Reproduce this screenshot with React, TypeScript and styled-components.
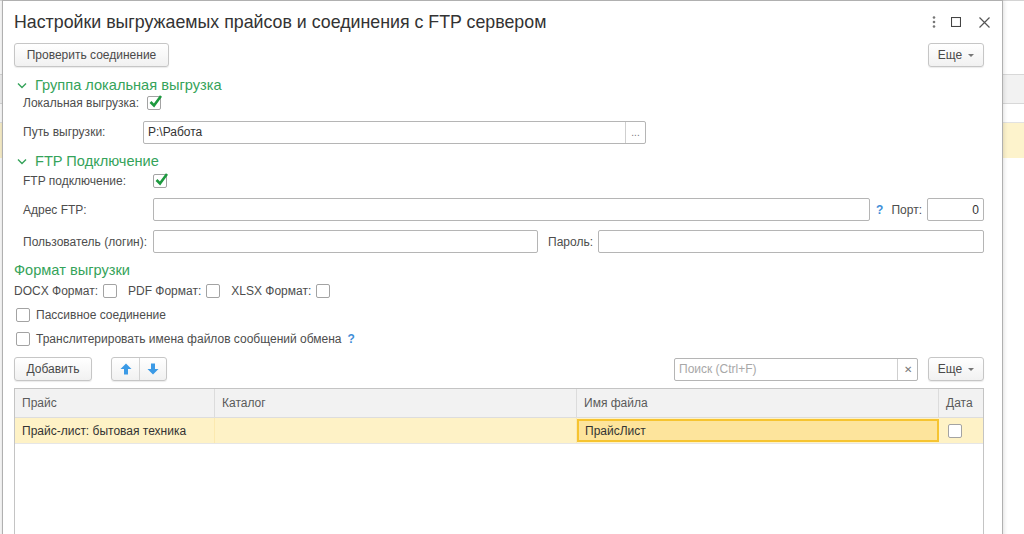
import React from "react";
import styled, { createGlobalStyle } from "styled-components";

const GlobalStyle = createGlobalStyle`
  html, body { margin: 0; padding: 0; background: #ffffff; }
  body { font-family: "Liberation Sans", Arial, sans-serif; }
  * { box-sizing: border-box; }
`;

const Desktop = styled.div`
  position: relative;
  width: 1024px;
  height: 534px;
  overflow: hidden;
  background: #ffffff;
`;

const Backdrop = styled.div`
  display: flex;
  flex-direction: column;
  height: 100%;
  border-top: 1px solid #d4d4d4;
`;

const BackHeader = styled.div`
  margin-top: 73px;
  height: 30px;
  background: #f2f2f2;
  border-top: 1px solid #d8d8d8;
  border-bottom: 1px solid #d8d8d8;
`;

const BackRow = styled.div`
  margin-top: 18px;
  height: 36px;
  border-top: 1px solid #e2e2e2;
  background: #fdf3cc;
`;

const Window = styled.section`
  position: absolute;
  left: 2px;
  top: 0;
  width: 1001px;
  height: 560px;
  background: #ffffff;
  border: 1px solid #b0b0b0;
  box-shadow: 0 0 5px rgba(0, 0, 0, 0.18);
  padding: 0 18px 0 11px;
  display: flex;
  flex-direction: column;
  color: #4a4a4a;
  font-size: 12px;
`;

const TitleBar = styled.header`
  display: flex;
  align-items: center;
  height: 42px;
  margin-right: -11px;
  flex-shrink: 0;
`;

const Title = styled.h1`
  margin: 0;
  flex: 1;
  font-weight: normal;
  font-size: 17.8px;
  color: #333333;
  padding-top: 1px;
`;

const TitleIcon = styled.span<{ $ml: number }>`
  display: flex;
  align-items: center;
  justify-content: center;
  width: 22px;
  height: 22px;
  margin-left: ${(p) => p.$ml}px;
`;

const Row = styled.div<{ $h: number; $mt?: number }>`
  display: flex;
  align-items: center;
  height: ${(p) => p.$h}px;
  margin-top: ${(p) => p.$mt ?? 0}px;
  flex-shrink: 0;
`;

const Spacer = styled.div`
  flex: 1;
`;

const Button = styled.button<{ $w?: number; $ml?: number }>`
  height: 24px;
  ${(p) => (p.$w ? `width: ${p.$w}px;` : "")}
  margin-left: ${(p) => p.$ml ?? 0}px;
  padding: 0 6px;
  white-space: nowrap;
  font-family: inherit;
  font-size: 12px;
  color: #4a4a4a;
  background: linear-gradient(#ffffff, #f1f1f1);
  border: 1px solid #c6c6c6;
  border-radius: 3px;
  box-shadow: 0 1px 1px rgba(0, 0, 0, 0.08);
  display: flex;
  align-items: center;
  justify-content: center;
  gap: 6px;
`;

const Caret = styled.span`
  width: 0;
  height: 0;
  border-left: 3px solid transparent;
  border-right: 3px solid transparent;
  border-top: 3px solid #777;
  margin-top: 1px;
`;

const GroupTitle = styled.div<{ $mt: number }>`
  display: flex;
  align-items: center;
  height: 18px;
  margin-top: ${(p) => p.$mt}px;
  color: #35a35a;
  font-size: 14.6px;
  flex-shrink: 0;
`;

const Chevron = styled.svg`
  width: 10px;
  height: 7px;
  margin: 0 8px 0 3px;
`;

const Label = styled.span<{ $w?: number; $pl?: number }>`
  ${(p) => (p.$w ? `width: ${p.$w}px;` : "")}
  padding-left: ${(p) => p.$pl ?? 0}px;
  flex-shrink: 0;
  white-space: nowrap;
  color: #4d4d4d;
`;

const Box = styled.span<{ $ml?: number }>`
  position: relative;
  width: 14px;
  height: 14px;
  flex-shrink: 0;
  margin-left: ${(p) => p.$ml ?? 0}px;
  border: 1px solid #a3a3a3;
  border-radius: 2px;
  background: #ffffff;
`;

const Tick = styled.svg`
  position: absolute;
  left: 1px;
  top: -3px;
  width: 13px;
  height: 14px;
`;

const Input = styled.div<{ $w?: number; $ml?: number; $align?: string }>`
  height: 23px;
  ${(p) => (p.$w ? `width: ${p.$w}px;` : "flex: 1;")}
  margin-left: ${(p) => p.$ml ?? 0}px;
  border: 1px solid #b5b5b5;
  border-radius: 2px;
  background: #ffffff;
  display: flex;
  align-items: center;
  justify-content: ${(p) => p.$align ?? "flex-start"};
  padding: 0 4px;
  color: #333;
  flex-shrink: 0;
`;

const FieldText = styled.span`
  flex: 1;
  color: #333;
`;

const Placeholder = styled.span`
  flex: 1;
  color: #a8a8a8;
`;

const InputButton = styled.span`
  width: 20px;
  align-self: stretch;
  margin-right: -4px;
  border-left: 1px solid #cfcfcf;
  display: flex;
  align-items: center;
  justify-content: center;
  color: #777;
  font-size: 10px;
`;

const Help = styled.span`
  color: #3f8ed8;
  font-weight: bold;
  font-size: 12px;
  margin: 0 8px 0 6px;
`;

const CheckLabel = styled.span`
  margin-left: 6px;
  color: #4d4d4d;
`;

const ArrowGroup = styled.div`
  display: flex;
  margin-left: 19px;
  height: 24px;
  border: 1px solid #c6c6c6;
  border-radius: 3px;
  background: linear-gradient(#ffffff, #f1f1f1);
  box-shadow: 0 1px 1px rgba(0, 0, 0, 0.08);
`;

const ArrowButton = styled.span<{ $sep?: boolean }>`
  width: 27px;
  display: flex;
  align-items: center;
  justify-content: center;
  ${(p) => (p.$sep ? "border-left: 1px solid #d2d2d2;" : "")}
`;

const Table = styled.div`
  margin-top: 7px;
  flex: 1;
  border: 1px solid #c4c4c4;
  display: flex;
  flex-direction: column;
`;

const GridRow = styled.div<{ $head?: boolean }>`
  display: grid;
  grid-template-columns: 200px 362px 362px 1fr;
  height: ${(p) => (p.$head ? 29 : 26)}px;
  background: ${(p) => (p.$head ? "#f2f2f2" : "#fef2c6")};
  border-bottom: 1px solid ${(p) => (p.$head ? "#dddddd" : "#e6e6e6")};
`;

const Cell = styled.div<{ $last?: boolean; $head?: boolean }>`
  display: flex;
  align-items: center;
  padding-left: 7px;
  border-right: ${(p) => (p.$last ? "none" : `1px solid ${p.$head ? "#dcdcdc" : "#fbe9b0"}`)};
  color: ${(p) => (p.$head ? "#5a5a5a" : "#333")};
  white-space: nowrap;
  overflow: hidden;
`;

const SelectedCell = styled.div`
  display: flex;
  align-items: center;
  margin: 1px 0;
  padding-left: 6px;
  background: #fde49c;
  border: 2px solid #f6c431;
  color: #333;
`;

const Check = () => (
  <Tick viewBox="0 0 13 14">
    <path d="M1.5 8 L5 11.5 L12 2" fill="none" stroke="#1d9a3f" strokeWidth="2.6" />
  </Tick>
);

const ArrowIcon = ({ down }: { down?: boolean }) => (
  <svg width="12" height="12" viewBox="0 0 12 12" style={{ transform: down ? "rotate(180deg)" : undefined }}>
    <path d="M6 0.5 L11.5 6 H8 V11.5 H4 V6 H0.5 Z" fill="#3b9ae6" />
  </svg>
);

const GroupChevron = () => (
  <Chevron viewBox="0 0 10 7">
    <path d="M1 1.5 L5 5.5 L9 1.5" fill="none" stroke="#35a35a" strokeWidth="1.4" />
  </Chevron>
);

export default function App() {
  return (
    <Desktop>
      <GlobalStyle />
      <Backdrop>
        <BackHeader />
        <BackRow />
      </Backdrop>
      <Window>
        <TitleBar>
          <Title>Настройки выгружаемых прайсов и соединения с FTP сервером</Title>
          <TitleIcon $ml={0}>
            <svg width="4" height="12" viewBox="0 0 4 12">
              <circle cx="2" cy="1.5" r="1.3" fill="#777" />
              <circle cx="2" cy="6" r="1.3" fill="#777" />
              <circle cx="2" cy="10.5" r="1.3" fill="#777" />
            </svg>
          </TitleIcon>
          <TitleIcon $ml={0}>
            <svg width="10" height="10" viewBox="0 0 10 10">
              <rect x="0.5" y="0.5" width="9" height="9" fill="none" stroke="#444" strokeWidth="1.1" />
            </svg>
          </TitleIcon>
          <TitleIcon $ml={6}>
            <svg width="11" height="11" viewBox="0 0 11 11">
              <path d="M0.5 0.5 L10.5 10.5 M10.5 0.5 L0.5 10.5" stroke="#555" strokeWidth="1.2" />
            </svg>
          </TitleIcon>
        </TitleBar>

        <Row $h={24}>
          <Button $w={155}>Проверить соединение</Button>
          <Spacer />
          <Button $w={56}>
            Еще <Caret />
          </Button>
        </Row>

        <GroupTitle $mt={9}>
          <GroupChevron />
          Группа локальная выгрузка
        </GroupTitle>
        <Row $h={18}>
          <Label $w={133} $pl={9}>Локальная выгрузка:</Label>
          <Box>
            <Check />
          </Box>
        </Row>
        <Row $h={24} $mt={8}>
          <Label $w={129} $pl={9}>Путь выгрузки:</Label>
          <Input $w={503}>
            <FieldText>P:\Работа</FieldText>
            <InputButton>...</InputButton>
          </Input>
        </Row>

        <GroupTitle $mt={8}>
          <GroupChevron />
          FTP Подключение
        </GroupTitle>
        <Row $h={22}>
          <Label $w={139} $pl={9}>FTP подключение:</Label>
          <Box>
            <Check />
          </Box>
        </Row>
        <Row $h={23} $mt={6}>
          <Label $w={139} $pl={9}>Адрес FTP:</Label>
          <Input />
          <Help>?</Help>
          <Label>Порт:</Label>
          <Input $w={57} $ml={5} $align="flex-end">
            0
          </Input>
        </Row>
        <Row $h={23} $mt={9}>
          <Label $w={139} $pl={9}>Пользователь (логин):</Label>
          <Input $w={385} />
          <Label $pl={10}>Пароль:</Label>
          <Input $ml={5} />
        </Row>

        <GroupTitle $mt={8}>Формат выгрузки</GroupTitle>
        <Row $h={24}>
          <Label>DOCX Формат:</Label>
          <Box $ml={5} />
          <Label $pl={11}>PDF Формат:</Label>
          <Box $ml={5} />
          <Label $pl={11}>XLSX Формат:</Label>
          <Box $ml={5} />
        </Row>
        <Row $h={24}>
          <Box $ml={2} />
          <CheckLabel>Пассивное соединение</CheckLabel>
        </Row>
        <Row $h={22} $mt={1}>
          <Box $ml={2} />
          <CheckLabel>Транслитерировать имена файлов сообщений обмена</CheckLabel>
          <Help>?</Help>
        </Row>

        <Row $h={24} $mt={7}>
          <Button $w={78}>Добавить</Button>
          <ArrowGroup>
            <ArrowButton>
              <ArrowIcon />
            </ArrowButton>
            <ArrowButton $sep>
              <ArrowIcon down />
            </ArrowButton>
          </ArrowGroup>
          <Spacer />
          <Input $w={244}>
            <Placeholder>Поиск (Ctrl+F)</Placeholder>
            <InputButton>✕</InputButton>
          </Input>
          <Button $w={56} $ml={10}>
            Еще <Caret />
          </Button>
        </Row>

        <Table>
          <GridRow $head>
            <Cell $head>Прайс</Cell>
            <Cell $head>Каталог</Cell>
            <Cell $head>Имя файла</Cell>
            <Cell $head $last>
              Дата
            </Cell>
          </GridRow>
          <GridRow>
            <Cell>Прайс-лист: бытовая техника</Cell>
            <Cell />
            <SelectedCell>ПрайсЛист</SelectedCell>
            <Cell $last>
              <Box $ml={2} />
            </Cell>
          </GridRow>
        </Table>
      </Window>
    </Desktop>
  );
}
